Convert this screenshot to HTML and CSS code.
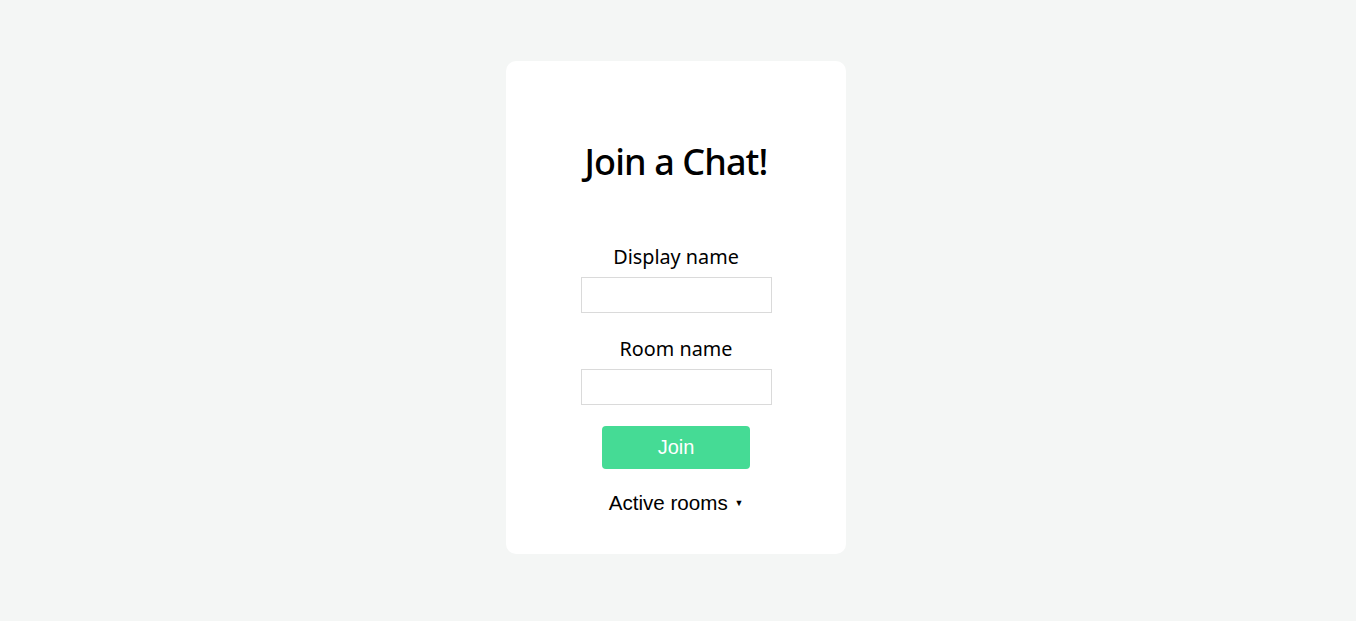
FILE: index.html
```html
<!DOCTYPE html>
<html lang="en">
<head>
<meta charset="utf-8">
<title>Join a Chat</title>
<link rel="stylesheet" href="styles.css">
</head>
<body>
<main class="page">
  <form class="card">
    <h1 class="title">Join a Chat!</h1>
    <label class="label label-first" for="display">Display name</label>
    <input class="field" id="display" type="text">
    <label class="label" for="room">Room name</label>
    <input class="field" id="room" type="text">
    <button class="join" type="button">Join</button>
    <div class="rooms">Active rooms <span class="caret">▼</span></div>
  </form>
</main>
</body>
</html>
```

FILE: styles.css
```css
html, body {
  margin: 0;
  padding: 0;
  background: #f4f6f5;
}
.page {
  display: flex;
  justify-content: center;
  padding-top: 61px;
  padding-right: 4px;
  min-height: 621px;
  box-sizing: border-box;
}
.card {
  width: 340px;
  height: 493px;
  box-sizing: border-box;
  background: #ffffff;
  border-radius: 10px;
  display: flex;
  flex-direction: column;
  align-items: center;
  padding: 78px 0 0;
  margin: 0;
}
.title {
  margin: 0;
  font-family: "Noto Sans", "Open Sans", sans-serif;
  font-weight: 500;
  font-size: 36px;
  line-height: 46px;
  color: #000;
  letter-spacing: -0.9px;
}
.label {
  font-family: "Noto Sans", sans-serif;
  font-size: 19.8px;
  line-height: 24px;
  color: #000;
  margin-top: 24px;
}
.label-first {
  margin-top: 60px;
}
.field {
  margin-top: 8px;
  width: 191px;
  height: 36px;
  box-sizing: border-box;
  border: 1px solid #dadada;
  border-radius: 0;
  background: #fff;
  padding: 0 8px;
  outline: none;
}
.join {
  margin-top: 21px;
  width: 148px;
  height: 43px;
  border: none;
  border-radius: 4px;
  background: #45db95;
  color: #fff;
  font-family: "Liberation Sans", Arial, sans-serif;
  font-size: 20px;
  padding: 0;
}
.rooms {
  margin-top: 22px;
  font-family: "Liberation Sans", Arial, sans-serif;
  font-size: 20.6px;
  line-height: 24px;
  color: #000;
}
.caret {
  font-size: 9px;
  vertical-align: 4px;
  margin-left: 1px;
}
```
